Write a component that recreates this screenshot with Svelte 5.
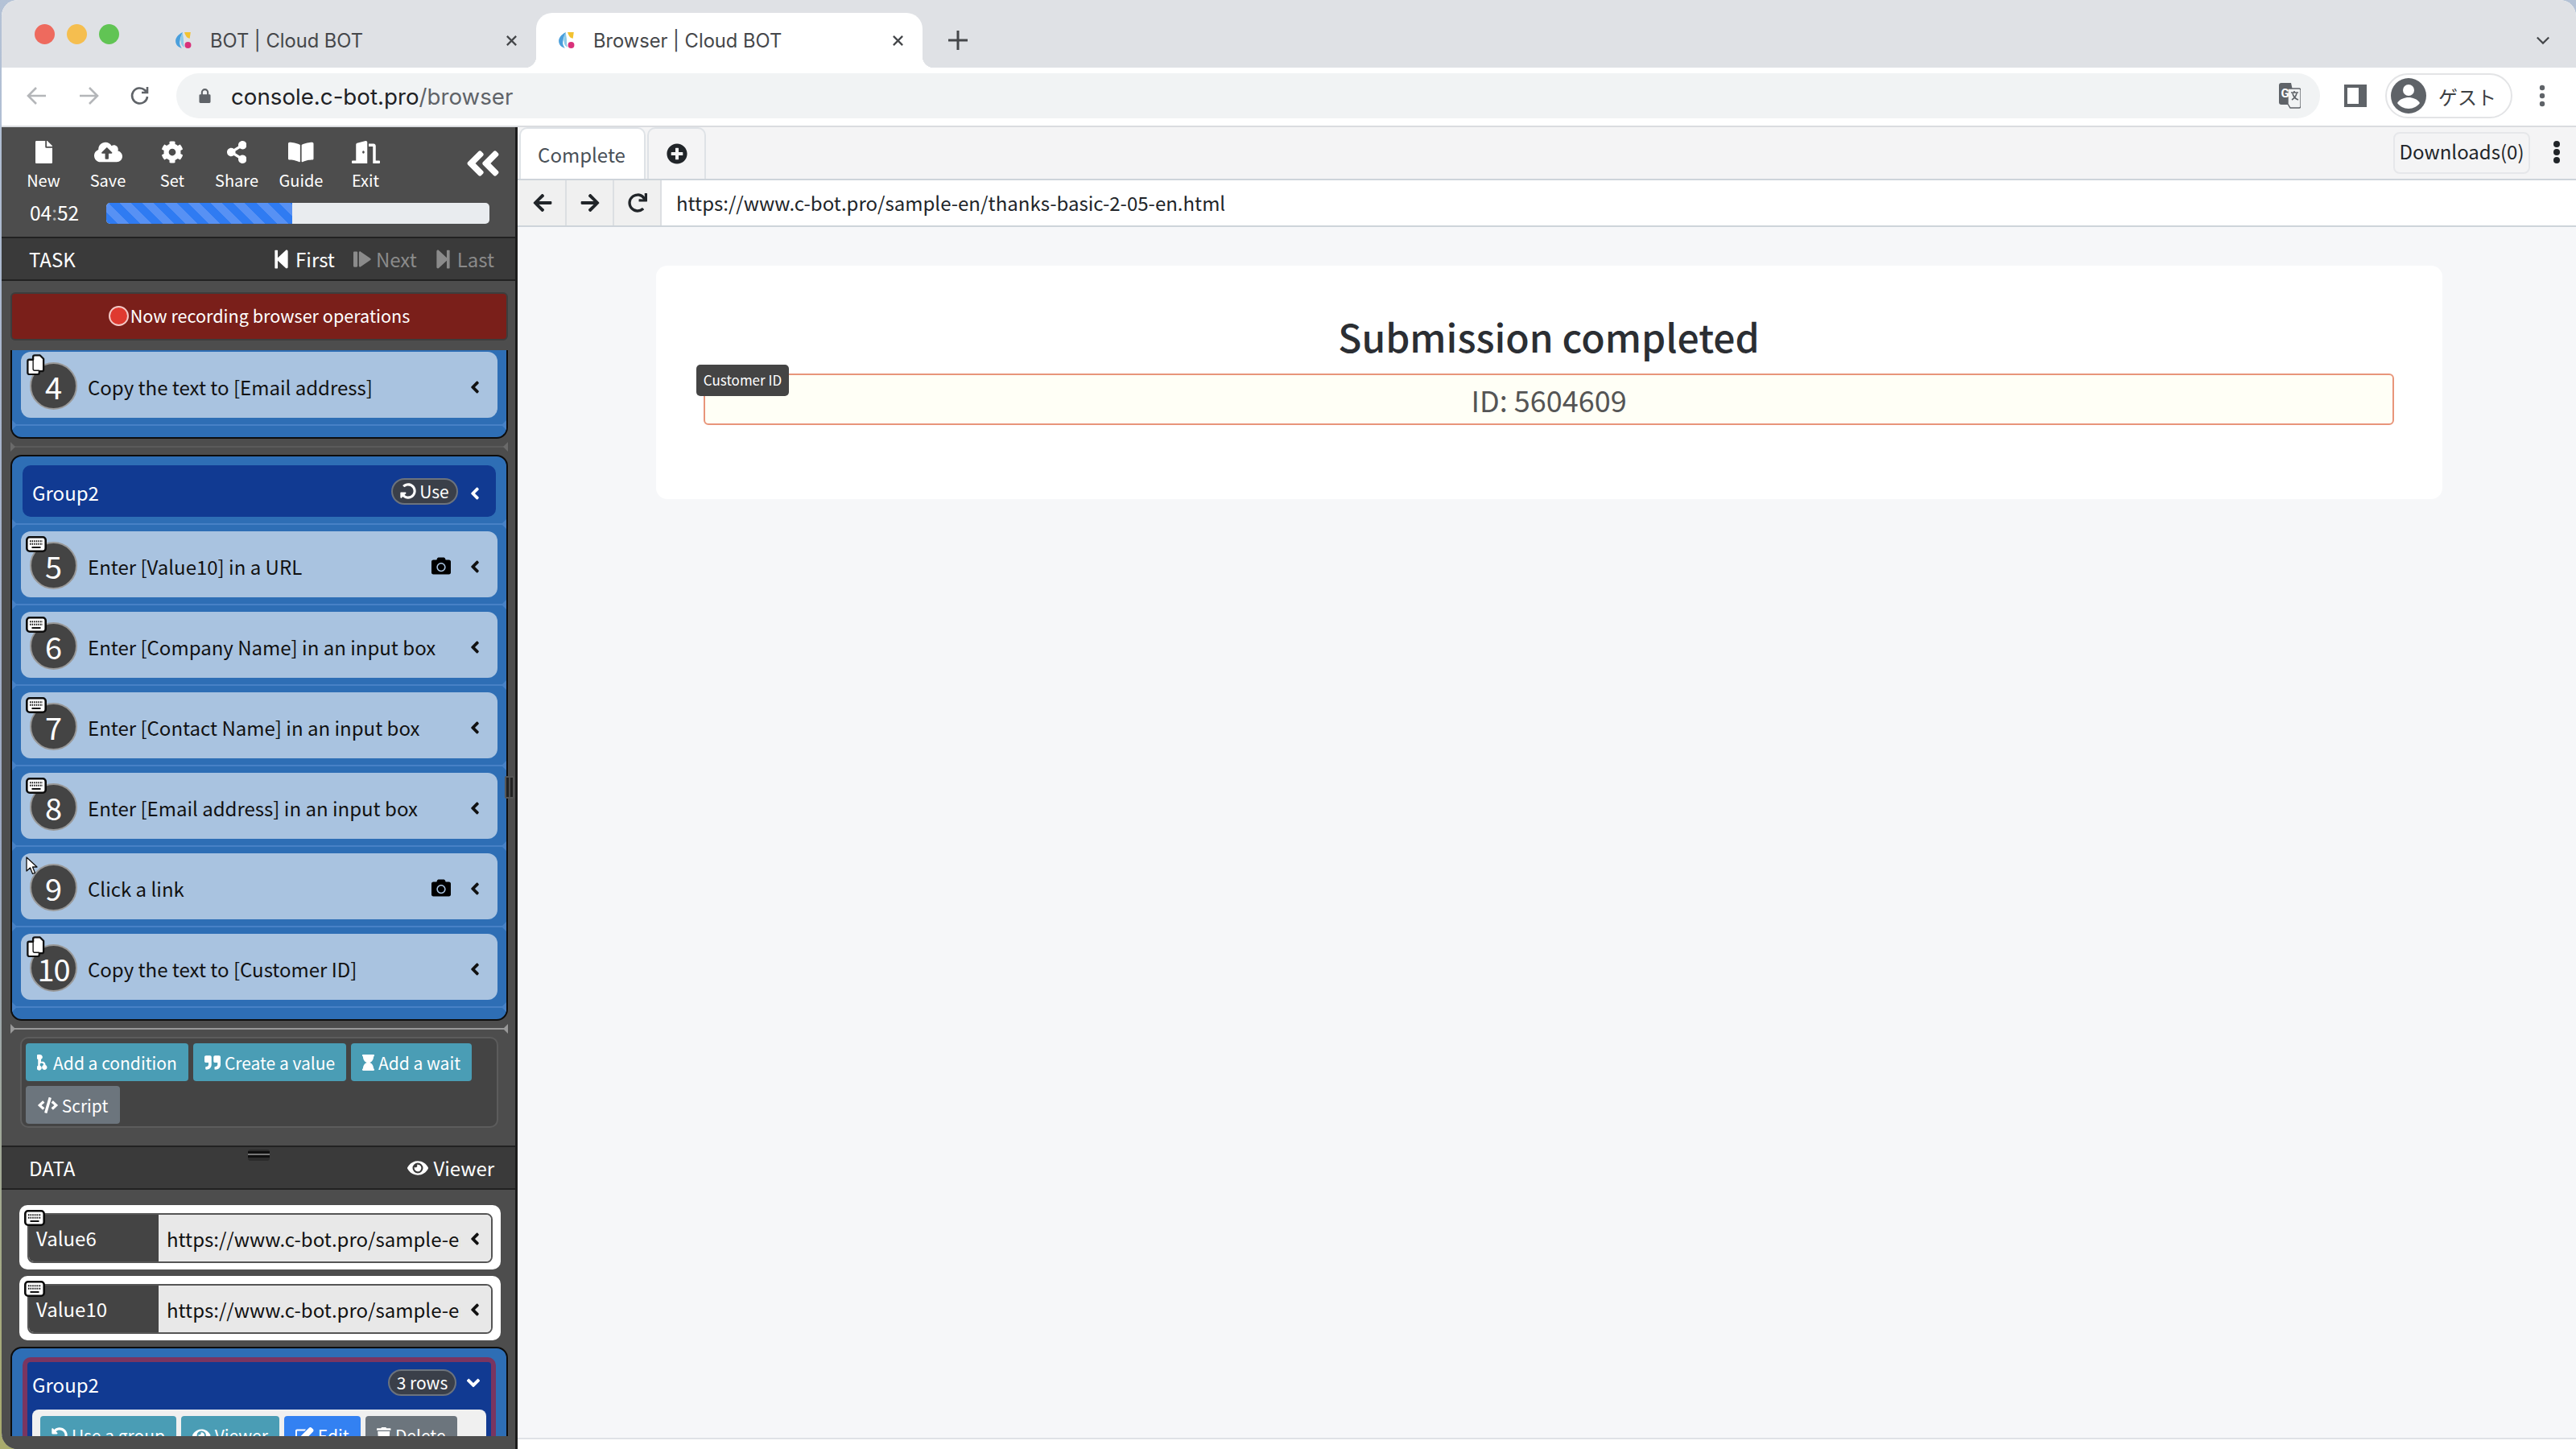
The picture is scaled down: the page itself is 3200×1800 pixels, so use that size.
<script>
	const paths = {
		file: [384, 'M224 136V0H24C10.7 0 0 10.7 0 24v464c0 13.3 10.7 24 24 24h336c13.3 0 24-10.7 24-24V160H248c-13.2 0-24-10.8-24-24zm160-14.1v6.1H256V0h6.1c6.4 0 12.5 2.5 17 7l97.9 98c4.5 4.5 7 10.6 7 16.9z'],
		cloud: [640, 'M537.6 226.6c4.1-10.7 6.4-22.4 6.4-34.6 0-53-43-96-96-96-19.7 0-38.1 6-53.3 16.2C367 64.2 315.3 32 256 32c-88.4 0-160 71.6-160 160 0 2.7.1 5.4.2 8.1C40.2 219.8 0 273.2 0 336c0 79.5 64.5 144 144 144h368c70.7 0 128-57.3 128-128 0-61.9-44-113.6-102.4-125.4zM393.4 288H328v112c0 8.8-7.2 16-16 16h-48c-8.8 0-16-7.2-16-16V288h-65.4c-14.3 0-21.4-17.2-11.3-27.3l105.4-105.4c6.2-6.2 16.4-6.2 22.6 0l105.4 105.4c10.1 10.1 2.9 27.3-11.3 27.3z'],
		cog: [512, 'M487.4 315.7l-42.6-24.6c4.3-23.2 4.3-47 0-70.2l42.6-24.6c4.9-2.8 7.1-8.6 5.5-14-11.1-35.6-30-67.8-54.7-94.6-3.8-4.1-10-5.1-14.8-2.3L380.8 110c-17.9-15.4-38.5-27.3-60.8-35.1V25.8c0-5.6-3.9-10.5-9.4-11.7-36.7-8.2-74.3-7.8-109.2 0-5.5 1.2-9.4 6.1-9.4 11.7V75c-22.2 7.9-42.8 19.8-60.8 35.1L88.7 85.5c-4.9-2.8-11-1.9-14.8 2.3-24.7 26.7-43.6 58.9-54.7 94.6-1.7 5.4.6 11.2 5.5 14L67.3 221c-4.3 23.2-4.3 47 0 70.2l-42.6 24.6c-4.9 2.8-7.1 8.6-5.5 14 11.1 35.6 30 67.8 54.7 94.6 3.8 4.1 10 5.1 14.8 2.3l42.6-24.6c17.9 15.4 38.5 27.3 60.8 35.1v49.2c0 5.6 3.9 10.5 9.4 11.7 36.7 8.2 74.3 7.8 109.2 0 5.5-1.2 9.4-6.1 9.4-11.7v-49.2c22.2-7.9 42.8-19.8 60.8-35.1l42.6 24.6c4.9 2.8 11 1.9 14.8-2.3 24.7-26.7 43.6-58.9 54.7-94.6 1.5-5.5-.7-11.3-5.6-14.1zM256 336c-44.1 0-80-35.9-80-80s35.9-80 80-80 80 35.9 80 80-35.9 80-80 80z'],
		share: [448, 'M352 320c-22.608 0-43.387 7.819-59.79 20.895l-102.486-64.054a96.551 96.551 0 0 0 0-41.683l102.486-64.054C308.613 184.181 329.392 192 352 192c53.019 0 96-42.981 96-96S405.019 0 352 0s-96 42.981-96 96c0 7.158.79 14.13 2.276 20.841L155.79 180.895C139.387 167.819 118.608 160 96 160c-53.019 0-96 42.981-96 96s42.981 96 96 96c22.608 0 43.387-7.819 59.79-20.895l102.486 64.054A96.301 96.301 0 0 0 256 416c0 53.019 42.981 96 96 96s96-42.981 96-96-42.981-96-96-96z'],
		book: [576, 'M542.22 32.05c-54.8 3.11-163.72 14.43-230.96 55.59-4.64 2.84-7.27 7.89-7.27 13.17v363.87c0 11.55 12.63 18.85 23.28 13.49 69.18-34.82 169.23-44.32 218.7-46.92 16.89-.89 30.02-14.43 30.02-30.66V62.75c.01-17.71-15.35-31.74-33.77-30.7zM264.73 87.64C197.5 46.48 88.58 35.17 33.78 32.05 15.36 31.01 0 45.04 0 62.75V400.6c0 16.24 13.13 29.78 30.02 30.66 49.49 2.6 149.59 12.11 218.77 46.95 10.62 5.35 23.21-1.94 23.21-13.46V100.63c0-5.29-2.62-10.14-7.27-12.99z'],
		door: [640, 'M624 448h-80V113.45C544 86.19 522.47 64 496 64H384v64h96v384h144c8.84 0 16-7.16 16-16v-32c0-8.84-7.16-16-16-16zM312.24 1.01l-192 49.74C105.99 54.44 96 67.7 96 82.92V448H16c-8.84 0-16 7.16-16 16v32c0 8.84 7.16 16 16 16h336V33.18c0-21.58-19.56-37.41-39.76-32.17zM264 288c-13.25 0-24-14.33-24-32s10.75-32 24-32 24 14.33 24 32-10.75 32-24 32z'],
		dleft: [448, 'M223.7 239l136-136c9.4-9.4 24.6-9.4 33.9 0l22.6 22.6c9.4 9.4 9.4 24.6 0 33.9L319.9 256l96.4 96.4c9.4 9.4 9.4 24.6 0 33.9L393.7 409c-9.4 9.4-24.6 9.4-33.9 0l-136-136c-9.5-9.4-9.5-24.6-.1-34zm-192 34l136 136c9.4 9.4 24.6 9.4 33.9 0l22.6-22.6c9.4-9.4 9.4-24.6 0-33.9L127.9 256l96.4-96.4c9.4-9.4 9.4-24.6 0-33.9L201.7 103c-9.4-9.4-24.6-9.4-33.9 0l-136 136c-9.5 9.4-9.5 24.6-.1 34z'],
		left: [256, 'M31.7 239l136-136c9.4-9.4 24.6-9.4 33.9 0l22.6 22.6c9.4 9.4 9.4 24.6 0 33.9L127.9 256l96.4 96.4c9.4 9.4 9.4 24.6 0 33.9L201.7 409c-9.4 9.4-24.6 9.4-33.9 0l-136-136c-9.5-9.4-9.5-24.6-.1-34z'],
		down: [320, 'M143 352.3L7 216.3c-9.4-9.4-9.4-24.6 0-33.9l22.6-22.6c9.4-9.4 24.6-9.4 33.9 0l96.4 96.4 96.4-96.4c9.4-9.4 24.6-9.4 33.9 0l22.6 22.6c9.4 9.4 9.4 24.6 0 33.9l-136 136c-9.2 9.4-24.4 9.4-33.8 0z'],
		camera: [512, 'M512 144v288c0 26.5-21.5 48-48 48H48c-26.5 0-48-21.5-48-48V144c0-26.5 21.5-48 48-48h88l12.3-32.9c7-18.7 24.9-31.1 44.9-31.1h125.5c20 0 37.9 12.4 44.9 31.1L376 96h88c26.5 0 48 21.5 48 48zM376 288c0-66.2-53.8-120-120-120s-120 53.8-120 120 53.8 120 120 120 120-53.8 120-120zm-32 0c0 48.5-39.5 88-88 88s-88-39.5-88-88 39.5-88 88-88 88 39.5 88 88z'],
		eye: [576, 'M572.52 241.4C518.29 135.59 410.93 64 288 64S57.68 135.64 3.48 241.41a32.35 32.35 0 0 0 0 29.19C57.71 376.41 165.07 448 288 448s230.32-71.64 284.52-177.41a32.35 32.35 0 0 0 0-29.19zM288 400a144 144 0 1 1 144-144 143.93 143.93 0 0 1-144 144zm0-240a95.31 95.31 0 0 0-25.31 3.79 47.85 47.85 0 0 1-66.9 66.9A95.78 95.78 0 1 0 288 160z'],
		undo: [512, 'M255.545 8c-66.269.119-126.438 26.233-170.86 68.685L48.971 40.971C33.851 25.851 8 36.559 8 57.941V192c0 13.255 10.745 24 24 24h134.059c21.382 0 32.09-25.851 16.971-40.971l-41.75-41.75c30.864-28.899 70.801-44.907 113.23-45.273 92.398-.798 170.283 73.977 169.484 169.442C423.236 348.009 349.816 424 256 424c-41.127 0-79.997-14.678-110.63-41.556-4.743-4.161-11.906-3.908-16.368.553L89.34 422.659c-4.872 4.872-4.631 12.815.482 17.433C133.798 479.813 192.074 504 256 504c136.966 0 247.999-111.033 248-247.998C504.001 119.193 392.354 7.755 255.545 8z'],
		first: [448, 'M64 468V44c0-6.6 5.4-12 12-12h48c6.6 0 12 5.4 12 12v176.4l195.5-181C352.1 22.3 384 36.6 384 64v384c0 27.4-31.9 41.7-52.5 24.6L136 292.7V468c0 6.6-5.4 12-12 12H76c-6.6 0-12-5.4-12-12z'],
		last: [448, 'M384 44v424c0 6.6-5.4 12-12 12h-48c-6.6 0-12-5.4-12-12V291.6l-195.5 181C95.9 489.7 64 475.4 64 448V64c0-27.4 31.9-41.7 52.5-24.6L312 219.3V44c0-6.6 5.4-12 12-12h48c6.6 0 12 5.4 12 12z'],
		next: [512, 'M0 60C0 44 12 32 28 32h64c16 0 28 12 28 28v392c0 16-12 28-28 28H28c-16 0-28-12-28-28zM160 64c0-27 32-42 52-25l280 192c16 12 16 38 0 50L212 473c-20 17-52 2-52-25z'],
		back: [448, 'M257.5 445.1l-22.2 22.2c-9.4 9.4-24.6 9.4-33.9 0L7 273c-9.4-9.4-9.4-24.6 0-33.9L201.4 44.7c9.4-9.4 24.6-9.4 33.9 0l22.2 22.2c9.5 9.5 9.3 25-.4 34.3L136.6 216H424c13.3 0 24 10.7 24 24v32c0 13.3-10.7 24-24 24H136.6l120.5 114.8c9.8 9.3 10 24.8.4 34.3z'],
		forward: [448, 'M190.5 66.9l22.2-22.2c9.4-9.4 24.6-9.4 33.9 0L441 239c9.4 9.4 9.4 24.6 0 33.9L246.6 467.3c-9.4 9.4-24.6 9.4-33.9 0l-22.2-22.2c-9.5-9.5-9.3-25 .4-34.3L311.4 296H24c-13.3 0-24-10.7-24-24v-32c0-13.3 10.7-24 24-24h287.4L190.9 101.2c-9.8-9.3-10-24.8-.4-34.3z'],
		redo: [512, 'M500.33 0h-47.41a12 12 0 0 0-12 12.57l4 82.76A247.42 247.42 0 0 0 256 8C119.34 8 7.9 119.53 8 256.19 8.1 393.07 119.1 504 256 504a247.1 247.1 0 0 0 166.18-63.91 12 12 0 0 0 .48-17.43l-34-34a12 12 0 0 0-16.38-.55A176 176 0 1 1 402.1 157.8l-101.53-4.87a12 12 0 0 0-12.57 12v47.41a12 12 0 0 0 12 12h200.33a12 12 0 0 0 12-12V12a12 12 0 0 0-12-12z'],
		plus: [512, 'M256 8C119 8 8 119 8 256s111 248 248 248 248-111 248-248S393 8 256 8zm144 276c0 6.6-5.4 12-12 12h-92v92c0 6.6-5.4 12-12 12h-56c-6.6 0-12-5.4-12-12v-92h-92c-6.6 0-12-5.4-12-12v-56c0-6.6 5.4-12 12-12h92v-92c0-6.6 5.4-12 12-12h56c6.6 0 12 5.4 12 12v92h92c6.6 0 12 5.4 12 12v56z'],
		quote: [512, 'M464 32H336c-26.5 0-48 21.5-48 48v128c0 26.5 21.5 48 48 48h80v64c0 35.3-28.7 64-64 64h-8c-13.3 0-24 10.7-24 24v48c0 13.3 10.7 24 24 24h8c88.4 0 160-71.6 160-160V80c0-26.5-21.5-48-48-48zm-288 0H48C21.5 32 0 53.5 0 80v128c0 26.5 21.5 48 48 48h80v64c0 35.3-28.7 64-64 64h-8c-13.3 0-24 10.7-24 24v48c0 13.3 10.7 24 24 24h8c88.4 0 160-71.6 160-160V80c0-26.5-21.5-48-48-48z'],
		hourglass: [384, 'M360 64c13.255 0 24-10.745 24-24V24c0-13.255-10.745-24-24-24H24C10.745 0 0 10.745 0 24v16c0 13.255 10.745 24 24 24 0 90.965 51.016 167.734 120.842 192C75.016 280.266 24 357.035 24 448c-13.255 0-24 10.745-24 24v16c0 13.255 10.745 24 24 24h336c13.255 0 24-10.745 24-24v-16c0-13.255-10.745-24-24-24 0-90.965-51.016-167.734-120.842-192C308.984 231.734 360 154.965 360 64z'],
		code: [640, 'M278.9 511.5l-61-17.7c-6.4-1.8-10-8.5-8.2-14.9L346.2 8.7c1.8-6.4 8.5-10 14.9-8.2l61 17.7c6.4 1.8 10 8.5 8.2 14.9L293.8 503.3c-1.9 6.4-8.5 10.1-14.9 8.2zm-114-112.2l43.5-46.4c4.6-4.9 4.3-12.7-.8-17.2L117 256l90.6-79.7c5.1-4.5 5.5-12.3.8-17.2l-43.5-46.4c-4.5-4.8-12.1-5.1-17-.5L3.8 247.2c-5.1 4.7-5.1 12.8 0 17.5l144.1 135.1c4.9 4.6 12.5 4.4 17-.5zm327.2.6l144.1-135.1c5.1-4.7 5.1-12.8 0-17.5L492.1 112.1c-4.8-4.5-12.4-4.3-17 .5L431.6 159c-4.6 4.9-4.3 12.7.8 17.2L523 256l-90.6 79.7c-5.1 4.5-5.5 12.3-.8 17.2l43.5 46.4c4.5 4.9 12.1 5.1 17 .6z'],
		edit: [576, 'M402.3 344.9l32-32c5-5 13.7-1.5 13.7 5.7V464c0 26.5-21.5 48-48 48H48c-26.5 0-48-21.5-48-48V112c0-26.5 21.5-48 48-48h273.5c7.1 0 10.7 8.6 5.7 13.7l-32 32c-1.5 1.5-3.5 2.3-5.7 2.3H48v352h352V350.5c0-2.1.8-4.1 2.3-5.6zm156.6-201.8L296.3 405.7l-90.4 10c-26.2 2.9-48.5-19.2-45.6-45.6l10-90.4L432.9 17.1c22.9-22.9 59.9-22.9 82.7 0l43.2 43.2c22.9 22.9 22.9 60 .1 82.8z'],
		trash: [448, 'M432 32H312l-9.4-18.7A24 24 0 0 0 281.1 0H166.8a23.72 23.72 0 0 0-21.4 13.3L136 32H16A16 16 0 0 0 0 48v32a16 16 0 0 0 16 16h416a16 16 0 0 0 16-16V48a16 16 0 0 0-16-16zM53.2 467a48 48 0 0 0 47.9 45h245.8a48 48 0 0 0 47.9-45L416 128H32z'],
		branch: [384, 'M96 0a80 80 0 0 1 32 153v78c40-16 90-10 118 30 20 28 24 50 24 71a80 80 0 1 1-64 0c0-14-3-28-14-42-22-30-70-30-96 2v57a80 80 0 1 1-64 3V153A80 80 0 0 1 96 0z']
	};

	const tools = [
		{ icon: 'file', label: 'New' },
		{ icon: 'cloud', label: 'Save' },
		{ icon: 'cog', label: 'Set' },
		{ icon: 'share', label: 'Share' },
		{ icon: 'book', label: 'Guide' },
		{ icon: 'door', label: 'Exit' }
	];

	const steps = [
		{ n: 5, text: 'Enter [Value10] in a URL', tag: 'kb', cam: true },
		{ n: 6, text: 'Enter [Company Name] in an input box', tag: 'kb' },
		{ n: 7, text: 'Enter [Contact Name] in an input box', tag: 'kb' },
		{ n: 8, text: 'Enter [Email address] in an input box', tag: 'kb' },
		{ n: 9, text: 'Click a link', tag: 'cursor', cam: true },
		{ n: 10, text: 'Copy the text to [Customer ID]', tag: 'copy' }
	];

	const actions = [
		{ icon: 'branch', label: 'Add a condition', w: 202 },
		{ icon: 'quote', label: 'Create a value', w: 190 },
		{ icon: 'hourglass', label: 'Add a wait', w: 150 },
		{ icon: 'code', label: 'Script', w: 117, grey: true }
	];

	const values = [
		{ name: 'Value6', url: 'https://www.c-bot.pro/sample-en/thanks-basic-2-05-en.html' },
		{ name: 'Value10', url: 'https://www.c-bot.pro/sample-en/thanks-basic-2-05-en.html' }
	];

	const groupActions = [
		{ icon: 'undo', label: 'Use a group', w: 169, cls: 'teal' },
		{ icon: 'eye', label: 'Viewer', w: 122, cls: 'teal' },
		{ icon: 'edit', label: 'Edit', w: 95, cls: 'blue' },
		{ icon: 'trash', label: 'Delete', w: 114, cls: 'grey' }
	];
</script>

{#snippet ico(name, cls)}
	<svg class="ico {cls}" viewBox="0 0 {paths[name][0]} 512" aria-hidden="true"><path d={paths[name][1]} /></svg>
{/snippet}

{#snippet favicon()}
	<svg class="favicon" viewBox="0 0 20 20" aria-hidden="true">
		<path d="M9 1C3 4 1 8 1 11c0 4 3 7 7 8-2-3-3-5-2-9 0-3 2-6 3-9z" fill="#4a9fdc" />
		<path d="M9 1C7 5 6 8 7 12c0 3 2 5 4 6-1-3-1-5-1-8 0-3-1-6-1-9z" fill="#8ccbe8" />
		<path d="M11 1h7l-1 7c-3 0-5-3-6-7z" fill="#f2c230" />
		<circle cx="15" cy="15.5" r="3.6" fill="#d9317a" />
	</svg>
{/snippet}

{#snippet tabClose()}
	<svg class="cclose" viewBox="0 0 16 16" aria-hidden="true"><path d="M2 2l12 12M14 2L2 14" stroke="#45474a" stroke-width="2.4" /></svg>
{/snippet}

{#snippet tagBadge(tag)}
	{#if tag === 'kb'}
		<svg class="badge kb" viewBox="0 0 26 20" aria-hidden="true">
			<rect x="1.3" y="1.3" width="23.4" height="17.4" rx="3.5" fill="#fff" stroke="#0c0c0c" stroke-width="2.6" />
			<path d="M5 6.200h16M5 9.800h16" stroke="#111" stroke-width="2" stroke-dasharray="1.500 1.100" />
			<path d="M7.500 14h11" stroke="#111" stroke-width="2" />
		</svg>
	{:else if tag === 'copy'}
		<svg class="badge copy" viewBox="0 0 24 27" aria-hidden="true">
			<path d="M9 3.500q0-2 2-2h7l4.500 4.500v14q0 2-2 2H17v2q0 2-2 2H4q-2 0-2-2V9q0-2 2-2h5z" fill="#fff" stroke="#111" stroke-width="2.400" stroke-linejoin="round" />
			<path d="M9 7v12q0 2 2 2h6" fill="none" stroke="#111" stroke-width="1.400" />
		</svg>
	{:else}
		<svg class="badge cursor" viewBox="0 0 15 23" aria-hidden="true">
			<path d="M1 1v17l4.500-4 3 7.500 3-1.200-3-7.300H14z" fill="#fff" stroke="#111" stroke-width="1.300" stroke-linejoin="round" />
		</svg>
	{/if}
{/snippet}

<div class="window">
	<div class="tabstrip">
		<div class="lights">
			<span class="light red"></span>
			<span class="light yellow"></span>
			<span class="light green"></span>
		</div>
		<div class="ctab">
			{@render favicon()}
			<span class="ctitle">BOT | Cloud BOT</span>
			{@render tabClose()}
		</div>
		<div class="ctab active">
			{@render favicon()}
			<span class="ctitle">Browser | Cloud BOT</span>
			{@render tabClose()}
		</div>
		<svg class="newtab" viewBox="0 0 24 24" aria-hidden="true"><path d="M12 0v24M0 12h24" stroke="#45474a" stroke-width="3" /></svg>
		<svg class="tablist" viewBox="0 0 20 12" aria-hidden="true"><path d="M2 2l8 8 8-8" fill="none" stroke="#45474a" stroke-width="2.400" /></svg>
	</div>

	<div class="omnibar">
		<svg class="nav" viewBox="0 0 28 28" aria-hidden="true"><path d="M25 14H4M13 4L3 14l10 10" fill="none" stroke="#b4b6b9" stroke-width="2.600" /></svg>
		<svg class="nav" viewBox="0 0 28 28" aria-hidden="true"><path d="M3 14h21M15 4l10 10-10 10" fill="none" stroke="#b4b6b9" stroke-width="2.600" /></svg>
		<svg class="nav" viewBox="0 0 28 28" aria-hidden="true"><path d="M23 15a9.500 9.500 0 1 1-3-8l3 3M23 3v7h-7" fill="none" stroke="#5f6368" stroke-width="2.600" /></svg>
		<div class="omnibox">
			<svg class="lock" viewBox="0 0 16 20" aria-hidden="true"><path d="M3 8V5.500a5 5 0 0 1 10 0V8h1q1.500 0 1.500 1.500V18q0 1.500-1.500 1.500H2Q.5 19.500.5 18V9.500Q.5 8 2 8zm2.200 0h5.600V5.500a2.800 2.800 0 0 0-5.600 0z" fill="#5f6368" /></svg>
			<span class="addr">console.c-bot.pro<span class="addr-path">/browser</span></span>
			<svg class="translate" viewBox="0 0 28 32" aria-hidden="true">
				<path d="M1 3q0-3 3-3h12l6 27H4q-3 0-3-3z" fill="#5f6368" />
				<path d="M12 7h14q2 0 2 2v20q0 2-2 2H15l-3-5z" fill="#f1f3f4" stroke="#5f6368" stroke-width="1.400" />
				<text x="3.500" y="18" font-size="15" font-weight="700" fill="#fff" font-family="Roboto, sans-serif">G</text>
				<path d="M16 12h9M20 10v2M18 13c1 5 4 7 7 8M23 13c-1 4-3 6-6 8" fill="none" stroke="#5f6368" stroke-width="1.600" />
			</svg>
		</div>
		<svg class="sidepanel" viewBox="0 0 28 28" aria-hidden="true"><path d="M0 0h28v28H0zM4 4v20h14V4z" fill="#5f6368" fill-rule="evenodd" /></svg>
		<div class="profile">
			<svg class="avatar" viewBox="0 0 44 44" aria-hidden="true">
				<circle cx="22" cy="22" r="22" fill="#5f6368" />
				<circle cx="22" cy="15" r="7" fill="#fff" />
				<path d="M8 31c3-5 9-7 14-7s11 2 14 7c-3 4-8 7-14 7S11 35 8 31z" fill="#fff" />
			</svg>
			<span class="guest">ゲスト</span>
		</div>
		<svg class="omnidots" viewBox="0 0 8 30" aria-hidden="true"><circle cx="4" cy="5" r="3.200" /><circle cx="4" cy="15" r="3.200" /><circle cx="4" cy="25" r="3.200" /></svg>
	</div>

	<div class="main">
		<aside class="sidebar">
			<div class="top">
				<div class="tools">
					{#each tools as t}
						<div class="tool">
							{@render ico(t.icon, 'ic-tool')}
							<span>{t.label}</span>
						</div>
					{/each}
					{@render ico('dleft', 'ic-collapse')}
				</div>
				<div class="timer">
					<span class="time">04<span class="colon">:</span>52</span>
					<div class="progress"><div class="fill" style="width: {(231 / 476) * 100}%"></div></div>
				</div>
			</div>

			<div class="bar">
				<span>TASK</span>
				<div class="stepper">
					<span class="stp on">{@render ico('first', 'ic-step')}First</span>
					<span class="stp">{@render ico('next', 'ic-next')}Next</span>
					<span class="stp">{@render ico('last', 'ic-step')}Last</span>
				</div>
			</div>

			<div class="taskarea">
				<div class="recording"><span class="recdot"></span>Now recording browser operations</div>

				<div class="group first">
					<div class="card">
						{@render tagBadge('copy')}
						<span class="num">4</span>
						<span class="ctext">Copy the text to [Email address]</span>
						{@render ico('left', 'ic-chev')}
					</div>
					<div class="sep"></div>
				</div>

				<div class="gap"><div class="sep dark"></div></div>

				<div class="group">
					<div class="ghead">
						<span>Group2</span>
						<span class="pill use">{@render ico('undo', 'ic-use')}Use</span>
						{@render ico('left', 'ic-chev light')}
					</div>
					<div class="sep"></div>
					{#each steps as s}
						<div class="card">
							{@render tagBadge(s.tag)}
							<span class="num" class:ten={s.n === 10}>{s.n}</span>
							<span class="ctext">{s.text}</span>
							{#if s.cam}{@render ico('camera', 'ic-cam')}{/if}
							{@render ico('left', 'ic-chev')}
						</div>
						<div class="sep"></div>
					{/each}
				</div>

				<div class="splitter"><div class="sep pale"></div></div>

				<div class="panel">
					{#each actions as a}
						<span class="act" class:grey={a.grey} style="width: {a.w}px">{@render ico(a.icon, 'ic-act')}{a.label}</span>
					{/each}
				</div>
			</div>

			<div class="bar databar">
				<span>DATA</span>
				<span class="handle"></span>
				<span class="viewer">{@render ico('eye', 'ic-eye')}Viewer</span>
			</div>

			<div class="dataarea">
				{#each values as v}
					<div class="valrow">
						{@render tagBadge('kb')}
						<div class="valbox">
							<span class="valname">{v.name}</span>
							<span class="valurl">
								<span class="urlclip">{v.url}</span>
								{@render ico('left', 'ic-chev')}
							</span>
						</div>
					</div>
				{/each}
				<div class="group open">
					<div class="ghead selected">
						<div class="gtitle">
							<span>Group2</span>
							<span class="pill">3 rows</span>
							{@render ico('down', 'ic-down')}
						</div>
						<div class="gactions">
							{#each groupActions as g}
								<span class="gact {g.cls}" style="width: {g.w}px">{@render ico(g.icon, 'ic-act')}{g.label}</span>
							{/each}
						</div>
					</div>
				</div>
			</div>
			<div class="foot"></div>
			<span class="resize"></span>
		</aside>

		<section class="pane">
			<div class="ptabs">
				<div class="ptab current">Complete</div>
				<div class="ptab add">{@render ico('plus', 'ic-plus')}</div>
				<div class="downloads">Downloads(0)</div>
				<svg class="pdots" viewBox="0 0 10 30" aria-hidden="true"><circle cx="5" cy="5" r="4" /><circle cx="5" cy="15" r="4" /><circle cx="5" cy="25" r="4" /></svg>
			</div>
			<div class="purl">
				<span class="pbtn">{@render ico('back', 'ic-nav')}</span>
				<span class="pbtn">{@render ico('forward', 'ic-nav')}</span>
				<span class="pbtn">{@render ico('redo', 'ic-nav')}</span>
				<span class="ptext">https://www.c-bot.pro/sample-en/thanks-basic-2-05-en.html</span>
			</div>
			<div class="content">
				<div class="sheet">
					<h1>Submission completed</h1>
					<div class="idbox">
						<span class="idlabel">Customer ID</span>
						ID: 5604609
					</div>
				</div>
			</div>
			<div class="pfoot"></div>
		</section>
	</div>
</div>

<style>
	:global(*) {
		box-sizing: border-box;
	}

	:global(body) {
		margin: 0;
		background: linear-gradient(#b4c2d6, #9aa6c0 60%, #a9ab6c);
	}

	.window {
		width: 3198px;
		height: 1800px;
		margin-left: 2px;
		display: flex;
		flex-direction: column;
		border-radius: 20px 20px 0 20px;
		overflow: hidden;
		background: #fff;
		font-family: "Noto Sans CJK JP", "Noto Sans", sans-serif;
	}

	.ico {
		fill: currentColor;
		flex: none;
		display: block;
	}

	/* browser chrome */
	.tabstrip {
		height: 84px;
		flex: none;
		background: #dfe1e5;
		display: flex;
		align-items: flex-end;
		font-family: Inter, Roboto, sans-serif;
		color: #45474a;
		position: relative;
	}

	.lights {
		position: absolute;
		left: 41px;
		top: 30px;
		display: flex;
		gap: 15px;
	}

	.light {
		width: 25px;
		height: 25px;
		border-radius: 50%;
	}

	.red { background: #ee6a5e; }
	.yellow { background: #f5be4f; }
	.green { background: #61c454; }

	.ctab {
		width: 480px;
		height: 68px;
		padding: 0 18px 0 27px;
		display: flex;
		align-items: center;
		font-size: 23.7px;
		border-radius: 20px 20px 0 0;
		position: relative;
	}

	.ctab:not(.active) {
		margin-left: 144px;
		width: 520px;
		padding-left: 71px;
	}

	.ctab.active {
		background: #fff;
	}

	.ctab.active::before,
	.ctab.active::after {
		content: "";
		position: absolute;
		bottom: 0;
		width: 14px;
		height: 14px;
	}

	.ctab.active::before {
		left: -14px;
		background: radial-gradient(circle at 0 0, transparent 14px, #fff 14.5px);
	}

	.ctab.active::after {
		right: -14px;
		background: radial-gradient(circle at 100% 0, transparent 14px, #fff 14.5px);
	}

	.favicon {
		width: 22px;
		height: 22px;
		margin-right: 22px;
		margin-top: -1px;
		flex: none;
	}

	.ctitle {
		flex: 1;
		white-space: nowrap;
	}

	.cclose {
		width: 15px;
		height: 15px;
		margin-right: 5px;
		flex: none;
	}

	.newtab {
		width: 24px;
		height: 24px;
		margin: 0 0 22px 32px;
	}

	.tablist {
		width: 18px;
		height: 12px;
		margin: 0 32px 28px auto;
	}

	.omnibar {
		height: 74px;
		flex: none;
		border-bottom: 2px solid #dadce0;
		display: flex;
		align-items: center;
		padding: 0 0 2px 30px;
	}

	.nav {
		width: 28px;
		height: 28px;
		margin-right: 36px;
		flex: none;
	}

	.omnibox {
		width: 2663px;
		margin-left: -5px;
		height: 56px;
		border-radius: 28px;
		background: #f1f3f4;
		display: flex;
		align-items: center;
		padding: 0 24px 0 28px;
	}

	.lock {
		width: 15px;
		height: 20px;
		margin-right: 25px;
	}

	.addr {
		font-family: Inter, Roboto, sans-serif;
		font-size: 27.7px;
		color: #202124;
		flex: 1;
		margin-top: 2px;
	}

	.addr-path {
		color: #5f6368;
	}

	.translate {
		width: 28px;
		height: 32px;
	}

	.sidepanel {
		width: 28px;
		height: 28px;
		margin-left: 30px;
		flex: none;
	}

	.profile {
		width: 158px;
		height: 56px;
		margin-left: 23px;
		border: 2px solid #e3e4e6;
		border-radius: 28px;
		display: flex;
		align-items: center;
		padding-left: 5px;
		flex: none;
	}

	.avatar {
		width: 44px;
		height: 44px;
	}

	.guest {
		font-size: 24px;
		margin-left: 15px;
		color: #3c4043;
		white-space: nowrap;
	}

	.omnidots {
		width: 8px;
		height: 30px;
		margin-left: 33px;
		fill: #5f6368;
		flex: none;
	}

	.main {
		flex: 1;
		min-height: 0;
		display: flex;
	}

	/* sidebar */
	.sidebar {
		width: 641px;
		flex: none;
		background: #4d4d4d;
		border-right: 3px solid #1c1c1c;
		color: #fff;
		display: flex;
		flex-direction: column;
		position: relative;
		font-size: 24px;
	}

	.top {
		height: 136px;
		flex: none;
		padding-top: 17px;
	}

	.tools {
		display: flex;
		padding-left: 12px;
		padding-right: 18px;
		height: 64px;
	}

	.tool {
		width: 80px;
		height: 64px;
		display: flex;
		flex-direction: column;
		align-items: center;
		gap: 7px;
		font-size: 20px;
		line-height: 28px;
	}

	.ic-tool {
		height: 28px;
		width: auto;
	}

	.ic-collapse {
		height: 50px;
		width: 44px;
		margin: 3px 0 0 auto;
	}

	.timer {
		display: flex;
		align-items: center;
		margin-top: 13px;
		padding-left: 35px;
	}

	.time {
		width: 95px;
		font-size: 24.5px;
		line-height: 26px;
		margin-top: -2px;
	}

	.colon {
		color: #aaa;
	}

	.progress {
		width: 476px;
		height: 26px;
		border-radius: 5px;
		background: #e9ecef;
		overflow: hidden;
	}

	.fill {
		height: 100%;
		background: repeating-linear-gradient(45deg, #2f7bf2 0 10px, #5791f4 10px 20px);
	}

	.bar {
		height: 55px;
		flex: none;
		background: #3a3a3a;
		border-top: 2px solid #222;
		border-bottom: 2px solid #222;
		display: flex;
		align-items: center;
		justify-content: space-between;
		padding: 0 26px 0 34px;
		font-size: 24px;
		position: relative;
	}

	.stepper {
		display: flex;
		align-items: center;
		gap: 23px;
	}

	.stp {
		display: flex;
		align-items: center;
		color: #8b8b8b;
	}

	.stp.on {
		color: #fff;
	}

	.ic-step {
		width: 23px;
		height: 26px;
		margin: 0 6px 0 -2px;
	}

	.ic-next {
		width: 22px;
		height: 24px;
		margin-right: 6px;
	}

	.taskarea {
		flex: none;
		height: 1074px;
		padding: 14px 9px 0 11px;
		display: flex;
		flex-direction: column;
	}

	.recording {
		height: 60px;
		flex: none;
		background: #7a1f1a;
		border: 2px solid #3d3d3d;
		border-radius: 6px;
		margin-bottom: 12px;
		padding-bottom: 4px;
		display: flex;
		align-items: center;
		justify-content: center;
		font-size: 21.6px;
	}

	.recdot {
		width: 25px;
		height: 25px;
		border-radius: 50%;
		background: #df3a30;
		border: 2px solid #f3c9c6;
		margin-right: 2px;
		margin-top: 2px;
		flex: none;
	}

	.group {
		background: #2e6eb5;
		border: 2px solid #0d0d0d;
		border-radius: 14px;
		padding: 11px 11px 14px;
	}

	.group.first {
		border-top: 0;
		border-radius: 0 0 14px 14px;
		padding-top: 2px;
		flex: none;
	}

	.sep {
		height: 2px;
		margin: 8px -11px;
		background: #4781c6;
		position: relative;
	}

	.sep::before,
	.sep::after {
		content: "";
		position: absolute;
		top: -5px;
		border-top: 6px solid transparent;
		border-bottom: 6px solid transparent;
	}

	.sep::before {
		left: 0;
		border-left: 6px solid #4781c6;
	}

	.sep::after {
		right: 0;
		border-right: 6px solid #4781c6;
	}

	.group .card + .sep:last-child {
		margin-bottom: 0;
	}

	.gap {
		height: 20px;
		flex: none;
		display: flex;
		align-items: center;
	}

	.sep.dark,
	.sep.pale {
		margin: 0;
		width: 100%;
	}

	.sep.dark {
		background: #5a5a5a;
	}

	.sep.dark::before { border-left-color: #6a6a6a; }
	.sep.dark::after { border-right-color: #6a6a6a; }

	.sep.pale {
		background: #999;
	}

	.sep.pale::before { border-left-color: #999; }
	.sep.pale::after { border-right-color: #999; }

	.card {
		height: 82px;
		background: #a9c3e0;
		border-radius: 12px;
		display: flex;
		align-items: center;
		padding: 0 22px 0 11px;
		position: relative;
		color: #111;
	}

	.num {
		width: 59px;
		height: 59px;
		border-radius: 50%;
		background: #444;
		border: 2px solid #999;
		color: #fff;
		font-size: 38px;
		line-height: 55px;
		text-align: center;
		margin-top: 2px;
		flex: none;
	}

	.num.ten {
		letter-spacing: -1px;
	}

	.ctext {
		margin-left: 13px;
		flex: 1;
		white-space: nowrap;
		margin-top: 5px;
	}

	.ic-chev {
		width: 12px;
		height: 24px;
		color: #111;
		margin-top: 5px;
	}

	.ic-chev.light {
		color: #fff;
		margin-top: 4px;
	}

	.valurl .ic-chev {
		margin-top: 1px;
	}

	.ic-cam {
		width: 24px;
		height: 24px;
		margin-right: 24px;
		color: #000;
		margin-top: 4px;
	}

	.badge {
		position: absolute;
		z-index: 2;
	}

	.badge.kb {
		width: 26px;
		height: 20px;
		left: 6px;
		top: 6px;
	}

	.badge.copy {
		width: 24px;
		height: 26px;
		left: 6px;
		top: 3px;
	}

	.badge.cursor {
		width: 15px;
		height: 23px;
		left: 6px;
		top: 4px;
	}

	.ghead {
		height: 64px;
		margin: 0 2px;
		background: #113a92;
		border-radius: 10px;
		display: flex;
		align-items: center;
		padding: 2px 20px 0 12px;
		color: #fff;
	}

	.ghead > span:first-child {
		flex: 1;
	}

	.pill {
		height: 33px;
		border-radius: 17px;
		border: 2px solid #6c737d;
		background: #3a3f49;
		display: flex;
		align-items: center;
		justify-content: center;
		font-size: 21px;
		color: #fff;
		flex: none;
	}

	.pill.use {
		width: 83px;
		margin-right: 15px;
		margin-top: -2px;
	}

	.ic-use {
		width: 20px;
		height: 20px;
		margin-right: 4px;
		transform: scaleY(-1);
	}

	.splitter {
		height: 20px;
		flex: none;
		display: flex;
		align-items: center;
	}

	.panel {
		margin: 0 12px 0 12px;
		height: 113px;
		flex: none;
		border: 2px solid #5c5c5c;
		border-radius: 10px;
		background: #444;
		padding: 6px 5px;
		display: flex;
		flex-wrap: wrap;
		gap: 6px;
		align-content: flex-start;
	}

	.act,
	.gact {
		height: 47px;
		border-radius: 4px;
		background: #4a9db5;
		display: flex;
		align-items: center;
		justify-content: center;
		font-size: 21px;
		color: #fff;
		white-space: nowrap;
	}

	.act.grey,
	.gact.grey {
		background: #6c757d;
	}

	.gact.teal {
		background: #4a9db5;
	}

	.gact.blue {
		background: #3381f2;
	}

	.ic-act {
		height: 20px;
		width: auto;
		margin-right: 5px;
	}

	.handle {
		position: absolute;
		left: 306px;
		top: 3px;
		width: 27px;
		height: 14px;
		border-radius: 3px;
		background: linear-gradient(#2b2b2b 0 2px, #0f0f0f 2px 5px, #777 5px 7px, #0f0f0f 7px 10px, #2b2b2b 10px);
	}

	.viewer {
		display: flex;
		align-items: center;
	}

	.ic-eye {
		width: 26px;
		height: 24px;
		margin-right: 6px;
	}

	.dataarea {
		flex: 1;
		min-height: 0;
		overflow: hidden;
		padding: 19px 9px 0 11px;
		display: flex;
		flex-direction: column;
		gap: 8px;
	}

	.valrow {
		height: 80px;
		flex: none;
		margin: 0 9px 0 11px;
		background: #fff;
		border-radius: 10px;
		padding: 10px 10px 8px;
		position: relative;
		color: #111;
	}

	.valbox {
		height: 62px;
		display: flex;
		border: 2px solid #555;
		border-radius: 8px;
		overflow: hidden;
	}

	.valname {
		width: 161px;
		background: #444;
		color: #fff;
		padding: 1px 0 0 9px;
		line-height: 56px;
		flex: none;
	}

	.valurl {
		flex: 1;
		min-width: 0;
		background: #e8e8e8;
		display: flex;
		align-items: center;
		padding: 0 14px 0 10px;
	}

	.urlclip {
		flex: 1;
		overflow: hidden;
		white-space: nowrap;
		margin-right: 12px;
	}

	.group.open {
		flex: none;
		height: 200px;
		overflow: hidden;
	}

	.ghead.selected {
		display: block;
		height: auto;
		border: 6px solid #7a3560;
		padding: 0 0 10px 0;
		border-radius: 10px;
	}

	.gtitle {
		height: 56px;
		margin-bottom: 3px;
		display: flex;
		align-items: center;
		padding: 0 14px 0 6px;
	}

	.gtitle > span:first-child {
		flex: 1;
		margin-top: -2px;
	}

	.gtitle .pill {
		width: 85px;
		margin-right: 13px;
		margin-top: -6px;
	}

	.ic-down {
		width: 16px;
		height: 26px;
		margin-top: -4px;
	}

	.gactions {
		margin: 0 6px;
		background: #f0f0f0;
		border-radius: 8px;
		padding: 8px 10px;
		display: flex;
		gap: 6px;
	}

	.foot {
		height: 16px;
		flex: none;
		background: #4d4d4d;
		position: relative;
	}

	.resize {
		position: absolute;
		left: 625px;
		top: 806px;
		width: 12px;
		height: 28px;
		border: 2px solid #555;
		background: linear-gradient(90deg, #222 0 3px, transparent 3px 5px, #222 5px);
		border-radius: 2px;
	}

	/* page pane */
	.pane {
		flex: 1;
		min-width: 0;
		display: flex;
		flex-direction: column;
		background: #f6f7f9;
		color: #212529;
	}

	.ptabs {
		height: 66px;
		flex: none;
		background: #f4f4f5;
		border-bottom: 2px solid #ced4da;
		display: flex;
		align-items: flex-end;
		padding-left: 2px;
		font-size: 24px;
	}

	.ptab {
		height: 64px;
		border: 2px solid #dee2e6;
		border-bottom: 0;
		border-radius: 10px 10px 0 0;
		display: flex;
		align-items: center;
		justify-content: center;
	}

	.ptab.current {
		width: 157px;
		background: #fff;
		color: #495057;
		padding-right: 2px;
	}

	.ptab.add {
		width: 73px;
		margin-left: 2px;
	}

	.ic-plus {
		width: 26px;
		height: 26px;
		color: #212529;
	}

	.downloads {
		width: 170px;
		height: 52px;
		margin: 0 0 6px auto;
		padding-bottom: 6px;
		border: 2px solid #e6e7ea;
		border-radius: 8px;
		display: flex;
		align-items: center;
		justify-content: center;
		font-size: 24px;
		white-space: nowrap;
	}

	.pdots {
		width: 10px;
		height: 30px;
		margin: 0 19px 18px 28px;
		fill: #212529;
	}

	.purl {
		height: 58px;
		flex: none;
		background: #fff;
		border-bottom: 2px solid #ced4da;
		display: flex;
		padding-left: 2px;
	}

	.pbtn {
		width: 59px;
		background: #f0f0f0;
		border-right: 2px solid #dcdfe2;
		display: flex;
		align-items: center;
		justify-content: center;
	}

	.ic-nav {
		width: 24px;
		height: 26px;
		color: #212529;
	}

	.ptext {
		padding-left: 18px;
		font-size: 24px;
		line-height: 56px;
		color: #212529;
	}

	.content {
		flex: 1;
		min-height: 0;
		padding: 48px 166px 0 172px;
	}

	.sheet {
		height: 290px;
		background: #fff;
		border-radius: 14px;
		padding: 50px 60px 0 59px;
	}

	h1 {
		margin: 0 0 4px;
		height: 80px;
		font-size: 48px;
		line-height: 75px;
		font-weight: 500;
		text-align: center;
		color: #2b2e33;
	}

	.idbox {
		height: 64px;
		background: #fffff6;
		border: 2px solid #e8957a;
		border-radius: 6px;
		text-align: center;
		font-size: 36px;
		line-height: 60px;
		color: #555;
		position: relative;
	}

	.idlabel {
		position: absolute;
		left: -11px;
		top: -13px;
		width: 115px;
		height: 39px;
		background: #444;
		border-radius: 5px;
		color: #fff;
		font-size: 17px;
		line-height: 38px;
	}

	.pfoot {
		height: 14px;
		flex: none;
		border-top: 2px solid #dfe2e6;
		background: #fff;
	}
</style>
